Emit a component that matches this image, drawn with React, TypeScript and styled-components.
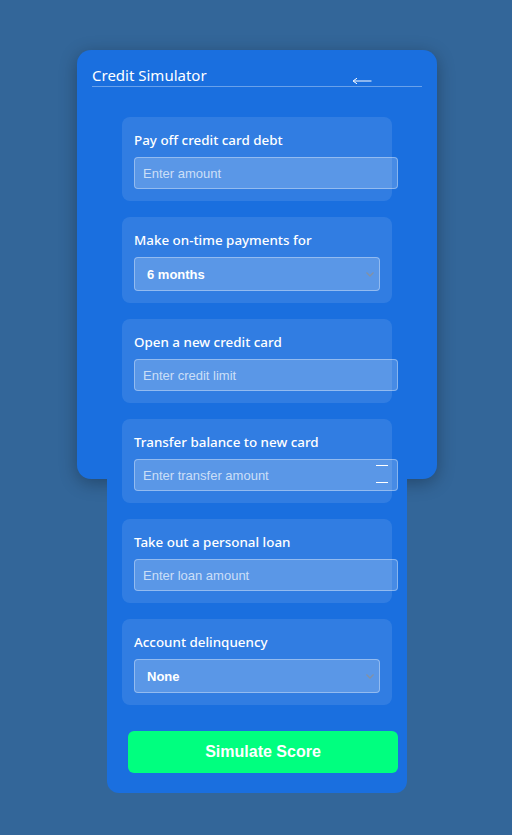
import styled, { createGlobalStyle } from 'styled-components';

const GlobalStyle = createGlobalStyle`
  body {
    margin: 0;
    background: #336699;
    font-family: "Noto Sans", "Liberation Sans", sans-serif;
  }
`;

const Page = styled.div`
  min-height: 835px;
  padding: 50px 0 0 2px;
  box-sizing: border-box;
`;

const Card = styled.div`
  width: 360px;
  height: 429px;
  margin: 0 auto;
  padding: 15px;
  box-sizing: border-box;
  background: #1a6fdf;
  border-radius: 14px;
  box-shadow: 0 4px 18px rgba(0, 0, 0, 0.3);
  color: #fff;
`;

const Header = styled.header`
  display: flex;
  justify-content: space-between;
  align-items: flex-end;
  border-bottom: 1px solid rgba(255, 255, 255, 0.35);
  margin-bottom: 15px;
`;

const Title = styled.h2`
  margin: 0;
  font-size: 15px;
  font-weight: 400;
  line-height: 21px;
`;

const BackArrow = styled.svg`
  display: block;
  margin: 0 50px 1px 0;
`;

const Form = styled.form`
  display: flex;
  flex-direction: column;
  gap: 16px;
  width: 300px;
  margin: 0 auto;
  padding: 15px 15px 15px;
  box-sizing: border-box;
  background: #1a6fdf;
  border-radius: 0 0 12px 12px;
`;

const Section = styled.div`
  display: flex;
  flex-direction: column;
  gap: 7px;
  padding: 13px 12px 12px;
  background: rgba(255, 255, 255, 0.1);
  border-radius: 8px;
`;

const Label = styled.label`
  font-size: 13.4px;
  font-weight: 500;
  line-height: 20px;
`;

const FieldWrap = styled.div`
  position: relative;
`;

const Input = styled.input`
  width: 100%;
  height: 30px;
  padding: 0 8px;
  border: 1px solid rgba(255, 255, 255, 0.35);
  border-radius: 4px;
  background: rgba(255, 255, 255, 0.2);
  color: #fff;
  font-family: "Liberation Sans", Arial, sans-serif;
  font-size: 13px;
  outline: none;
  &::placeholder {
    color: rgba(255, 255, 255, 0.7);
  }
`;

const Select = styled.select`
  width: 100%;
  height: 34px;
  padding: 0 8px 0 12px;
  border: 1px solid rgba(255, 255, 255, 0.35);
  border-radius: 4px;
  background: rgba(255, 255, 255, 0.2);
  color: #fff;
  font-family: "Liberation Sans", Arial, sans-serif;
  font-size: 13px;
  font-weight: 700;
  outline: none;
  appearance: none;
`;

const Chevron = styled.svg`
  position: absolute;
  right: 6px;
  top: 15px;
  pointer-events: none;
`;

const Spinner = styled.svg`
  position: absolute;
  right: -9px;
  top: 4px;
`;

const SubmitButton = styled.button`
  width: 270px;
  height: 42px;
  margin: 10px 0 5px 6px;
  border: none;
  border-radius: 6px;
  background: #00ff7f;
  color: #fff;
  font-family: "Liberation Sans", Arial, sans-serif;
  font-size: 16px;
  font-weight: 700;
`;

function SelectField({ value, options }: { value: string; options: string[] }) {
  return (
    <FieldWrap>
      <Select defaultValue={value}>
        {options.map((o) => (
          <option key={o} value={o}>
            {o}
          </option>
        ))}
      </Select>
      <Chevron width="8" height="5" viewBox="0 0 8 5">
        <path d="M0.5 0.5 L4 4 L7.5 0.5" fill="none" stroke="#8491a3" strokeWidth="1.3" />
      </Chevron>
    </FieldWrap>
  );
}

export default function App() {
  return (
    <Page>
      <GlobalStyle />
      <Card>
        <Header>
          <Title>Credit Simulator</Title>
          <BackArrow width="20" height="8" viewBox="0 0 20 8">
            <path d="M2 4 H19.5 M1 4 L5 1.2 M1 4 L5 6.8" fill="none" stroke="#fff" strokeWidth="1" />
          </BackArrow>
        </Header>
        <Form onSubmit={(e) => e.preventDefault()}>
          <Section>
            <Label>Pay off credit card debt</Label>
            <Input type="text" placeholder="Enter amount" />
          </Section>
          <Section>
            <Label>Make on-time payments for</Label>
            <SelectField value="6 months" options={['6 months', '12 months', '24 months']} />
          </Section>
          <Section>
            <Label>Open a new credit card</Label>
            <Input type="text" placeholder="Enter credit limit" />
          </Section>
          <Section>
            <Label>Transfer balance to new card</Label>
            <FieldWrap>
              <Input type="text" placeholder="Enter transfer amount" />
              <Spinner width="14" height="24" viewBox="0 0 14 24">
                <line x1="1" y1="2.5" x2="13" y2="2.5" stroke="#fff" strokeWidth="1" />
                <line x1="1" y1="19.5" x2="13" y2="19.5" stroke="#fff" strokeWidth="1" />
              </Spinner>
            </FieldWrap>
          </Section>
          <Section>
            <Label>Take out a personal loan</Label>
            <Input type="text" placeholder="Enter loan amount" />
          </Section>
          <Section>
            <Label>Account delinquency</Label>
            <SelectField value="None" options={['None', '30 days late', '60 days late']} />
          </Section>
          <SubmitButton type="submit">Simulate Score</SubmitButton>
        </Form>
      </Card>
    </Page>
  );
}
